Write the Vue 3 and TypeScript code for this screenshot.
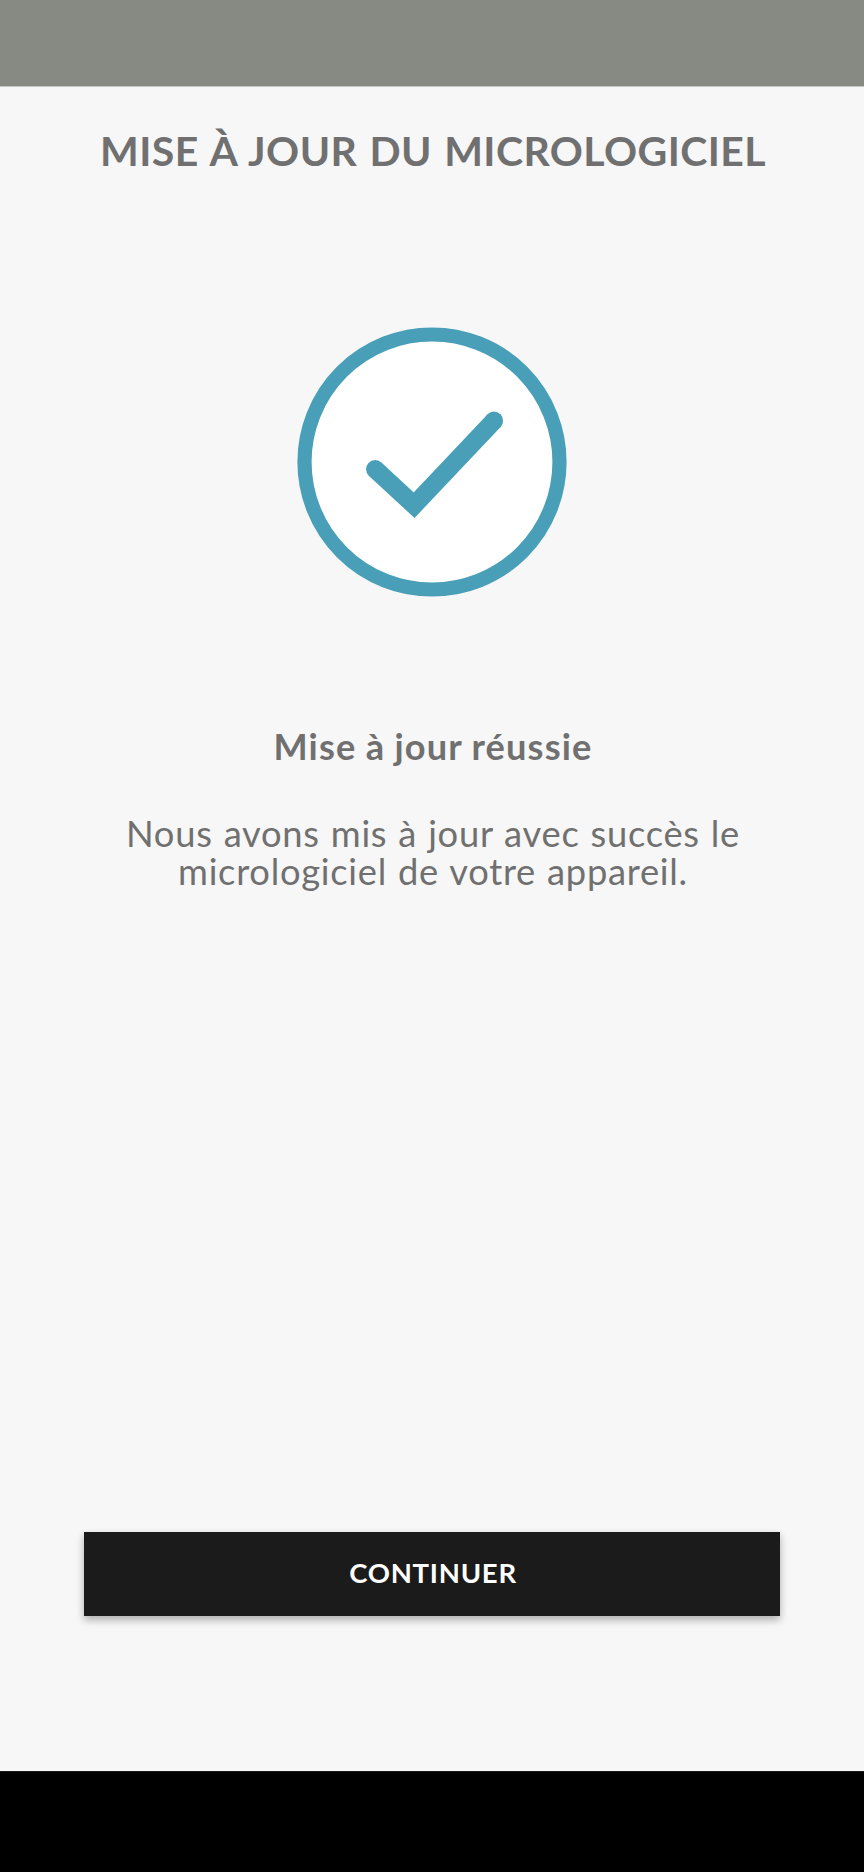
<script setup lang="ts">
const title: string = 'MISE À JOUR DU MICROLOGICIEL'
const heading: string = 'Mise à jour réussie'
const messageLines: string[] = ['Nous avons mis à jour avec succès le', 'micrologiciel de votre appareil.']
const action: string = 'CONTINUER'
</script>

<template>
  <div class="screen">
    <div class="status-bar"></div>
    <main class="content">
      <h1 class="title">{{ title }}</h1>
      <svg class="success" viewBox="0 0 270 270" aria-hidden="true">
        <circle cx="135" cy="135" r="127.5" fill="#fff" stroke="#489fb7" stroke-width="14.2" />
        <path
          d="M78.2 142.2 L117.1 178.2 L197 93.7"
          fill="none"
          stroke="#489fb7"
          stroke-width="18.2"
          stroke-linejoin="miter"
        />
        <circle cx="78.2" cy="142.2" r="9.1" fill="#489fb7" />
        <circle cx="197" cy="93.7" r="9.1" fill="#489fb7" />
      </svg>
      <h2 class="heading">{{ heading }}</h2>
      <p class="message">
        <span v-for="line in messageLines" :key="line">{{ line }}</span>
      </p>
      <button class="continue" type="button">{{ action }}</button>
    </main>
    <div class="nav-bar"></div>
  </div>
</template>

<style>
body {
  margin: 0;
  background: #f7f7f7;
}
</style>

<style scoped>
.screen {
  display: flex;
  flex-direction: column;
  width: 864px;
  height: 1872px;
  overflow: hidden;
  background: #f7f7f7;
  color: #707070;
  font-family: Lato, 'Open Sans', sans-serif;
}
.status-bar {
  box-sizing: border-box;
  height: 87px;
  flex: none;
  background: #878983;
  border-bottom: 1px solid #c6c7c5;
}
.content {
  flex: 1;
  display: flex;
  flex-direction: column;
  align-items: center;
}
.title {
  margin: 40px 0 0;
  padding-left: 2px;
  font-size: 41px;
  line-height: 48px;
  font-weight: 700;
  letter-spacing: 0.4px;
  word-spacing: 1.9px;
  white-space: nowrap;
}
.success {
  display: block;
  flex: none;
  width: 270px;
  height: 270px;
  margin-top: 152.4px;
}
.heading {
  margin: 127.6px 0 0;
  padding-left: 2px;
  font-size: 36.2px;
  line-height: 42px;
  font-weight: 700;
  letter-spacing: 1.15px;
  word-spacing: -0.7px;
  white-space: nowrap;
}
.message {
  display: flex;
  flex-direction: column;
  align-items: center;
  margin: 48px 0 0;
  padding-left: 2px;
  font-size: 36.3px;
  line-height: 37.7px;
  letter-spacing: 0.74px;
  word-spacing: 1px;
  white-space: nowrap;
}
.continue {
  width: 696px;
  height: 84px;
  margin: auto 0 155px;
  padding: 0 0 2px 2px;
  border: 0;
  background: #1b1b1b;
  color: #fff;
  font: 700 27.5px/82px Lato, 'Open Sans', sans-serif;
  letter-spacing: 0.75px;
  box-shadow: 0 4px 8px rgba(0, 0, 0, 0.3);
}
.nav-bar {
  box-sizing: border-box;
  height: 101px;
  flex: none;
  background: #000;
  border-top: 1px solid #1b1b1b;
}
</style>
